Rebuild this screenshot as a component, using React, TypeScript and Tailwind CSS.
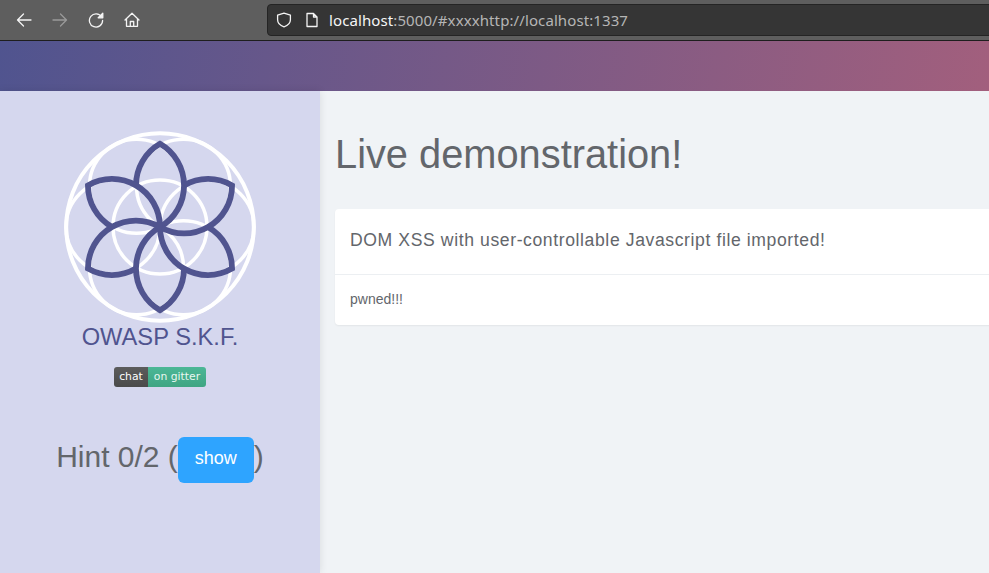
import * as React from "react";

const PETAL_ANGLES = [0, 60, 120, 180, 240, 300];
const WHITE_CIRCLES = [
  [23.5, -40.7],
  [47, 0],
  [23.5, 40.7],
  [-23.5, 40.7],
  [-47, 0],
  [-23.5, -40.7],
  [0, 0],
];

// flower logo: white circles under six pinwheel petals
function Logo() {
  return (
    <svg viewBox="-97 -97 194 194" className="w-[194px] h-[194px] block">
      <circle cx="0" cy="0" r="93.8" fill="none" stroke="#fff" strokeWidth="4" />
      {WHITE_CIRCLES.map(([x, y], i) => (
        <circle key={i} cx={x} cy={y} r="47" fill="none" stroke="#fff" strokeWidth="3.5" />
      ))}
      {PETAL_ANGLES.map((a) => (
        <path
          key={a}
          transform={`rotate(${a})`}
          d="M-24 -41.6 A48 48 0 0 1 0 -83.2 A48 48 0 0 1 0 0"
          fill="none"
          stroke="#50548f"
          strokeWidth="5.8"
          strokeLinejoin="miter"
        />
      ))}
    </svg>
  );
}

function ToolbarIcon({ children, off }: { children: React.ReactNode; off?: boolean }) {
  return (
    <svg
      viewBox="0 0 16 16"
      fill="none"
      stroke={off ? "#9a9a9a" : "#f4f4f4"}
      strokeWidth="1.3"
      strokeLinecap="round"
      strokeLinejoin="round"
      className="w-4 h-4 shrink-0"
    >
      {children}
    </svg>
  );
}

function BrowserBar() {
  return (
    <div className="h-[41px] bg-[#5e5e5e] border-b border-[#1e1e1e] flex items-center pl-4 shrink-0">
      <div className="flex items-center gap-5">
        <ToolbarIcon>
          <path d="M15 8H1.5M7.5 2L1.5 8l6 6" />
        </ToolbarIcon>
        <ToolbarIcon off>
          <path d="M1 8h13.5M8.5 2l6 6-6 6" />
        </ToolbarIcon>
        <ToolbarIcon>
          <path d="M13.6 5A6.6 6.6 0 1 0 14.6 8.5" />
          <path d="M14.8 1.2v4.6h-4.6z" fill="#f4f4f4" />
        </ToolbarIcon>
        <ToolbarIcon>
          <path d="M1 8L8 1.2 15 8M2.5 7v7.3h11V7M6.3 14.3V9.5h3.4v4.8" />
        </ToolbarIcon>
      </div>
      <div className="ml-[127px] w-[760px] shrink-0 h-[32px] bg-[#353535] rounded-[4px] border border-[#242424] flex items-center pl-[8px]">
        <ToolbarIcon>
          <path d="M8 1.2l6.4 1.9v4.7c0 3.6-3.2 6-6.4 7-3.2-1-6.4-3.4-6.4-7V3.1z" />
        </ToolbarIcon>
        <span className="ml-[12px]">
          <ToolbarIcon>
            <path d="M3 1.5h6.5L13 5v9.5H3zM9.5 1.5V5H13" />
          </ToolbarIcon>
        </span>
        <span className="ml-[9px] font-['Noto_Sans',sans-serif] text-[15px] tracking-[0.1px] text-[#b5b5b5] whitespace-nowrap">
          <span className="text-[#f5f5f5]">localhost</span>:5000/#xxxxhttp://localhost:1337
        </span>
      </div>
    </div>
  );
}

function Badge() {
  return (
    <div className="flex h-5 w-[92px] rounded-[3px] overflow-hidden font-['DejaVu_Sans',sans-serif] text-[10.8px] leading-5 text-white">
      <span className="w-[34px] text-center bg-gradient-to-b from-[#5c5c5c] to-[#4a4a4a]">chat</span>
      <span className="flex-1 text-center bg-gradient-to-b from-[#4cb796] to-[#3fa582] text-[#e8f7f1]">on gitter</span>
    </div>
  );
}

function Sidebar() {
  return (
    <aside className="relative w-[320px] shrink-0 bg-[#d5d7ee] shadow-[0_0_8px_rgba(0,0,0,0.1)] flex flex-col items-center pt-[39px]">
      <Logo />
      <div className="mt-[-3px] text-[23.7px] leading-[32px] text-[#50548f]">OWASP S.K.F.</div>
      <div className="mt-[14px]">
        <Badge />
      </div>
      <div className="mt-[50px] flex items-center text-[30px] leading-[36px] text-[#63666b] whitespace-nowrap">
        <span className="mb-[6px]">Hint 0/2 (</span>
        <button className="w-[76px] h-[46px] rounded-[6px] bg-[#2ea4ff] text-white text-[18px] leading-[27px] pb-[3px]">show</button>
        <span className="mb-[6px]">)</span>
      </div>
    </aside>
  );
}

export default function App() {
  return (
    <div className="w-[989px] h-[573px] overflow-hidden flex flex-col font-['Liberation_Sans',Arial,sans-serif]">
      <BrowserBar />
      <div className="h-[50px] shrink-0 bg-[linear-gradient(100deg,#50548f,#a25f7d)]" />
      <div className="flex flex-1 min-h-0">
        <Sidebar />
        <main className="flex-1 bg-[#f0f3f6] pl-[15px] pt-[37px] overflow-hidden">
          <h1 className="text-[39.8px] leading-[52px] text-[#63666b]">Live demonstration!</h1>
          <div className="mt-[29px] w-[800px] bg-white rounded-[4px] shadow-[0_1px_2px_rgba(0,0,0,0.06)]">
            <div className="h-[66px] border-b border-[#eceff2] pl-[15px] pb-[3px] flex items-center text-[17.6px] tracking-[0.6px] text-[#63666b]">
              DOM XSS with user-controllable Javascript file imported!
            </div>
            <div className="h-[50px] pl-[15px] pb-[2px] flex items-center text-[14px] text-[#63666b]">pwned!!!</div>
          </div>
        </main>
      </div>
    </div>
  );
}
